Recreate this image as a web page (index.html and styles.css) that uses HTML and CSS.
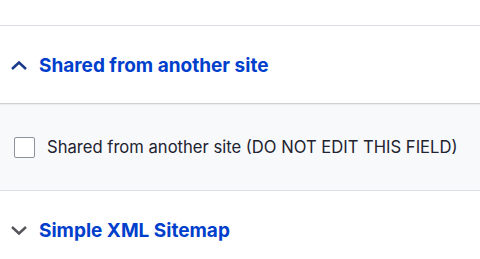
FILE: index.html
```html
<!doctype html>
<html>
<head>
  <link rel="stylesheet" href="styles.css">
</head>
<body>
  <div class="top"></div>

  <div class="section open">
    <div class="summary">
      <svg class="chev up" width="18" height="11" viewBox="0 0 18 11"><path d="M2 9 L9 2.5 L16 9" fill="none" stroke-width="2.5"/></svg>
      <span class="title">Shared from another site</span>
    </div>
    <div class="content">
      <label class="check">
        <span class="box"></span>
        <span class="label">Shared from another site (DO NOT EDIT THIS FIELD)</span>
      </label>
    </div>
  </div>

  <div class="section">
    <div class="summary">
      <svg class="chev down" width="18" height="11" viewBox="0 0 18 11"><path d="M2 2 L9 8.5 L16 2" fill="none" stroke-width="2.5"/></svg>
      <span class="title">Simple XML Sitemap</span>
    </div>
  </div>
</body>
</html>
```

FILE: styles.css
```css
body{
  margin:0;
  background:#fff;
  font-family:Inter, "Liberation Sans", Arial, sans-serif;
  color:#222330;
}
.top{
  height:25px;
  border-bottom:1px solid #dedfe4;
}
.summary{
  display:flex;
  align-items:center;
  height:77px;
  padding-left:10px;
  padding-top:2px;
  box-sizing:border-box;
}
.open .summary{
  box-shadow:0 1px 2px rgba(0,0,0,0.15);
  position:relative;
}
.chev{
  margin-right:11px;
}
.chev.up{ stroke:#1b3a8c; }
.chev.down{ stroke:#55565b; }
.title{
  font-size:19px;
  font-weight:bold;
  color:#003ecc;
}
.content{
  background:#f8f9fb;
  height:86px;
  border-top:1px solid #e6e7eb;
  border-bottom:1px solid #dedfe4;
  display:flex;
  align-items:center;
  padding-left:14px;
}
.check{
  display:flex;
  align-items:center;
}
.box{
  width:19px;
  height:19px;
  border:1px solid #8e929c;
  border-radius:2px;
  background:#fff;
  margin-right:12px;
}
.label{
  font-size:16.6px;
}
```
